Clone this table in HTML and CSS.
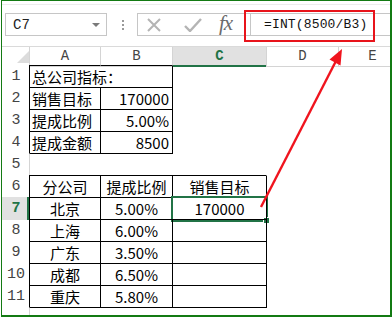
FILE: index.html
```html
<!DOCTYPE html>
<html>
<head>
<meta charset="utf-8">
<link rel="stylesheet" href="styles.css">
</head>
<body>
<div class="frame">
  <div class="toolbar">
    <div class="namebox"><span class="nb-text">C7</span><span class="nb-arrow"></span></div>
    <div class="dots"><i></i><i></i><i></i></div>
    <div class="iconbox">
      <svg class="ic-x" width="14" height="14" viewBox="0 0 14 14"><path d="M1 1 L13 13 M13 1 L1 13" stroke="#b4b4b4" stroke-width="2" fill="none"/></svg>
      <svg class="ic-ok" width="18" height="14" viewBox="0 0 18 14"><path d="M1 8 L6 13 L17 1" stroke="#b4b4b4" stroke-width="2.4" fill="none"/></svg>
      <span class="fx">fx</span>
    </div>
    <div class="input">=INT(8500/B3)</div>
  </div>
  <div class="sheet">
    <div class="row hdr">
      <div class="rh corner"><svg width="12" height="12" viewBox="0 0 12 12"><polygon points="12,0 12,12 0,12" fill="#dcdcdc"/></svg></div>
      <div class="ch">A</div><div class="ch">B</div><div class="ch sel-h">C</div><div class="ch">D</div><div class="ch">E</div>
    </div>
    <div class="row">
      <div class="rh">1</div>
      <div class="c ga bl bt left wide">总公司指标：</div><div class="c bt"></div><div class="c bl"></div><div class="c"></div><div class="c"></div>
    </div>
    <div class="row">
      <div class="rh">2</div>
      <div class="c bl bt left">销售目标</div><div class="c bl bt right">170000</div><div class="c bl"></div><div class="c"></div><div class="c"></div>
    </div>
    <div class="row">
      <div class="rh">3</div>
      <div class="c bl bt left">提成比例</div><div class="c bl bt right">5.00%</div><div class="c bl"></div><div class="c"></div><div class="c"></div>
    </div>
    <div class="row">
      <div class="rh">4</div>
      <div class="c bl bt left">提成金额</div><div class="c bl bt right">8500</div><div class="c bl"></div><div class="c"></div><div class="c"></div>
    </div>
    <div class="row">
      <div class="rh">5</div>
      <div class="c ga bt"></div><div class="c bt"></div><div class="c"></div><div class="c"></div><div class="c"></div>
    </div>
    <div class="row">
      <div class="rh">6</div>
      <div class="c bl bt mid">分公司</div><div class="c bl bt mid">提成比例</div><div class="c bl bt mid">销售目标</div><div class="c bl"></div><div class="c"></div>
    </div>
    <div class="row">
      <div class="rh sel-r">7</div>
      <div class="c bl bt mid">北京</div><div class="c bl bt mid">5.00%</div><div class="c bl bt mid active">170000<span class="selbox"></span><span class="handle"></span></div><div class="c bl"></div><div class="c"></div>
    </div>
    <div class="row">
      <div class="rh">8</div>
      <div class="c bl bt mid">上海</div><div class="c bl bt mid">6.00%</div><div class="c bl bt"></div><div class="c bl"></div><div class="c"></div>
    </div>
    <div class="row">
      <div class="rh">9</div>
      <div class="c bl bt mid">广东</div><div class="c bl bt mid">3.50%</div><div class="c bl bt"></div><div class="c bl"></div><div class="c"></div>
    </div>
    <div class="row">
      <div class="rh">10</div>
      <div class="c bl bt mid">成都</div><div class="c bl bt mid">6.50%</div><div class="c bl bt"></div><div class="c bl"></div><div class="c"></div>
    </div>
    <div class="row">
      <div class="rh">11</div>
      <div class="c bl bt mid">重庆</div><div class="c bl bt mid">5.80%</div><div class="c bl bt"></div><div class="c bl"></div><div class="c"></div>
    </div>
    <div class="row">
      <div class="rh"></div>
      <div class="c ga bt"></div><div class="c bt"></div><div class="c bt"></div><div class="c"></div><div class="c"></div>
    </div>
  </div>
</div>
<div class="redbox"></div>
<svg class="arrow" width="392" height="317" viewBox="0 0 392 317">
  <line x1="261" y1="207" x2="337" y2="59" stroke="#f0141e" stroke-width="2.4"/>
  <polygon points="342,49 340.5,65.5 329.5,59.5" fill="#f0141e"/>
</svg>
</body>
</html>
```
FILE: styles.css
```css
html, body {
  margin: 0;
  padding: 0;
  background: #fff;
}
body {
  position: relative;
  width: 392px;
  height: 317px;
  overflow: hidden;
}
.frame {
  margin-left: 1px;
  width: 391px;
  height: 317px;
  box-sizing: border-box;
  border-style: solid;
  border-color: #137a13;
  border-width: 1px 2px 2px 1px;
  overflow: hidden;
  background: #fff;
}
.toolbar {
  height: 46px;
  box-sizing: border-box;
  border-bottom: 1px solid #dadada;
  display: flex;
  align-items: flex-start;
  padding-top: 12px;
  position: relative;
}
.toolbar::before {
  content: "";
  position: absolute;
  left: 0;
  right: 0;
  top: 3px;
  border-top: 1px solid #ececec;
}
.namebox {
  margin-left: 3px;
  width: 102px;
  height: 23px;
  box-sizing: border-box;
  border: 1px solid #c6c6c6;
  display: flex;
  align-items: center;
  justify-content: space-between;
  padding: 0 6px 0 7px;
}
.nb-text {
  font-family: "Liberation Mono", monospace;
  font-size: 14px;
  color: #222;
}
.nb-arrow {
  width: 0;
  height: 0;
  border-left: 4px solid transparent;
  border-right: 4px solid transparent;
  border-top: 4px solid #7a7a7a;
  margin-top: 1px;
}
.dots {
  margin-left: 15px;
  height: 23px;
  display: flex;
  flex-direction: column;
  justify-content: center;
  gap: 2px;
}
.dots i {
  display: block;
  width: 2px;
  height: 2px;
  background: #9a9a9a;
}
.iconbox {
  margin-left: 13px;
  width: 113px;
  height: 23px;
  box-sizing: border-box;
  border: 1px solid #c6c6c6;
  border-right: none;
  display: flex;
  align-items: center;
  padding-left: 9px;
}
.ic-x { margin-right: 23px; }
.ic-ok { margin-right: 17px; }
.fx {
  font-family: "Liberation Serif", serif;
  font-style: italic;
  font-size: 21px;
  color: #6b6b6b;
  letter-spacing: -1px;
  line-height: 1;
  margin-top: -2px;
}
.input {
  flex: 1;
  height: 23px;
  box-sizing: border-box;
  border: 1px solid #c6c6c6;
  border-right: none;
  padding-left: 13px;
  font-family: "Liberation Mono", monospace;
  font-size: 13px;
  letter-spacing: 0.15px;
  line-height: 21px;
  color: #111;
  white-space: nowrap;
}
.sheet {
  display: flex;
  flex-direction: column;
}
.row {
  display: grid;
  grid-template-columns: 27px 71px 72px 94px 72px 68px;
  height: 22px;
}
.row.hdr {
  height: 18px;
}
.rh {
  font-family: "Liberation Mono", monospace;
  font-size: 15px;
  color: #444;
  text-align: center;
  line-height: 23px;
  padding-left: 1px;
}
.corner {
  display: flex;
  justify-content: flex-end;
  align-items: flex-end;
  padding: 0 0 4px 0;
}
.ch {
  border-left: 1px solid #d4d4d4;
  border-bottom: 1px solid #d4d4d4;
  font-family: "Liberation Mono", monospace;
  font-size: 14px;
  color: #444;
  text-align: center;
  line-height: 19px;
}
.sel-h {
  background: #e1e1e1;
  color: #217346;
  font-weight: bold;
  border-bottom: 2px solid #217346;
  line-height: 18px;
}
.sel-r {
  background: #e1e1e1;
  color: #217346;
  font-weight: bold;
  box-shadow: inset -2px 0 0 #217346;
}
.c {
  position: relative;
  border-left: 1px solid transparent;
  border-top: 1px solid transparent;
  font-family: "Noto Sans CJK SC", "Noto Sans", sans-serif;
  font-size: 15px;
  color: #000;
  line-height: 21px;
  white-space: nowrap;
}
.c.ga { border-left-color: #d4d4d4; }
.c.bl { border-left-color: #000; }
.c.bt { border-top-color: #000; }
.left { padding-left: 2px; }
.right { text-align: right; padding-right: 3px; }
.mid { text-align: center; }
.wide { overflow: visible; }
.selbox {
  position: absolute;
  left: -2px;
  top: -2px;
  right: -2px;
  bottom: -2px;
  border: 2px solid #217346;
}
.handle {
  position: absolute;
  right: -4px;
  bottom: -4px;
  width: 5px;
  height: 5px;
  background: #217346;
  border: 1px solid #fff;
}
.redbox {
  position: absolute;
  left: 244px;
  top: 10px;
  width: 131px;
  height: 32px;
  box-sizing: border-box;
  border: 2px solid #e8141b;
}
.arrow {
  position: absolute;
  left: 0;
  top: 0;
}
```
